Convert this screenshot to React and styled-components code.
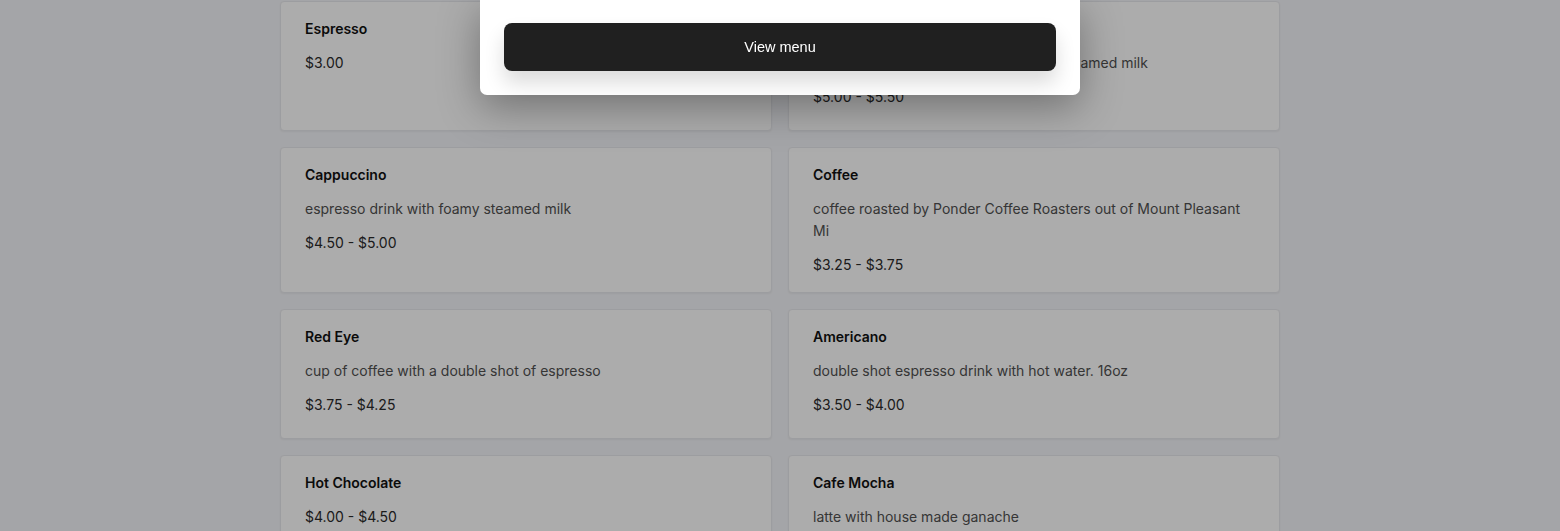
import React from "react";
import styled, { createGlobalStyle } from "styled-components";

const GlobalStyle = createGlobalStyle`
  html, body {
    margin: 0;
    padding: 0;
    overflow: hidden;
    background: #f4f5f9;
  }
  * { box-sizing: border-box; }
`;

const Page = styled.main`
  min-height: 100vh;
  padding-top: 1px;
  font-family: Inter, "Noto Sans", sans-serif;
`;

const Grid = styled.section`
  width: 1000px;
  margin: 0 auto;
  display: grid;
  grid-template-columns: 1fr 1fr;
  gap: 16px;
`;

const Card = styled.article`
  min-height: 130px;
  display: flex;
  flex-direction: column;
  gap: 12px;
  padding: 16px 24px;
  background: #ffffff;
  border: 1px solid #e8e9ed;
  border-radius: 4px;
  box-shadow: 0 1px 2px rgba(0, 0, 0, 0.05);
`;

const Title = styled.h3`
  margin: 0;
  font-size: 14px;
  line-height: 22px;
  font-weight: 600;
  color: #111111;
`;

const Desc = styled.p`
  margin: 0;
  font-size: 14px;
  line-height: 22px;
  color: #505050;
`;

const Price = styled.p`
  margin: 0;
  font-size: 14px;
  line-height: 22px;
  color: #2a2a2a;
`;

const Backdrop = styled.div`
  position: fixed;
  inset: 0;
  background: rgba(0, 0, 0, 0.325);
`;

const Modal = styled.div`
  position: fixed;
  top: 0;
  left: 50%;
  transform: translateX(-50%);
  width: 600px;
  padding: 23px 24px 24px;
  background: #ffffff;
  border-radius: 0 0 7px 7px;
  box-shadow: 0 12px 40px rgba(0, 0, 0, 0.34);
`;

const ViewButton = styled.button`
  display: flex;
  align-items: center;
  justify-content: center;
  width: 100%;
  height: 48px;
  border: none;
  border-radius: 8px;
  background: #202020;
  color: #ffffff;
  font-family: "Liberation Sans", Arial, sans-serif;
  font-size: 14.5px;
  cursor: pointer;
  box-shadow: 0 12px 20px rgba(0, 0, 0, 0.14);
`;

const items = [
  { name: "Espresso", price: "$3.00" },
  {
    name: "Latte",
    desc: "espresso drink with a bit of froth and steamed milk",
    price: "$5.00 - $5.50",
  },
  {
    name: "Cappuccino",
    desc: "espresso drink with foamy steamed milk",
    price: "$4.50 - $5.00",
  },
  {
    name: "Coffee",
    desc: "coffee roasted by Ponder Coffee Roasters out of Mount Pleasant Mi",
    price: "$3.25 - $3.75",
  },
  {
    name: "Red Eye",
    desc: "cup of coffee with a double shot of espresso",
    price: "$3.75 - $4.25",
  },
  {
    name: "Americano",
    desc: "double shot espresso drink with hot water. 16oz",
    price: "$3.50 - $4.00",
  },
  { name: "Hot Chocolate", price: "$4.00 - $4.50" },
  {
    name: "Cafe Mocha",
    desc: "latte with house made ganache",
    price: "$5.25 - $5.75",
  },
  { name: "Chai Latte", desc: "spiced black tea with steamed milk", price: "$4.50 - $5.00" },
  { name: "Tea", desc: "loose leaf hot tea", price: "$3.00" },
];

export default function App() {
  return (
    <>
      <GlobalStyle />
      <Page>
        <Grid>
          {items.map((item) => (
            <Card key={item.name}>
              <Title>{item.name}</Title>
              {item.desc && <Desc>{item.desc}</Desc>}
              <Price>{item.price}</Price>
            </Card>
          ))}
        </Grid>
      </Page>
      <Backdrop />
      <Modal>
        <ViewButton>View menu</ViewButton>
      </Modal>
    </>
  );
}
